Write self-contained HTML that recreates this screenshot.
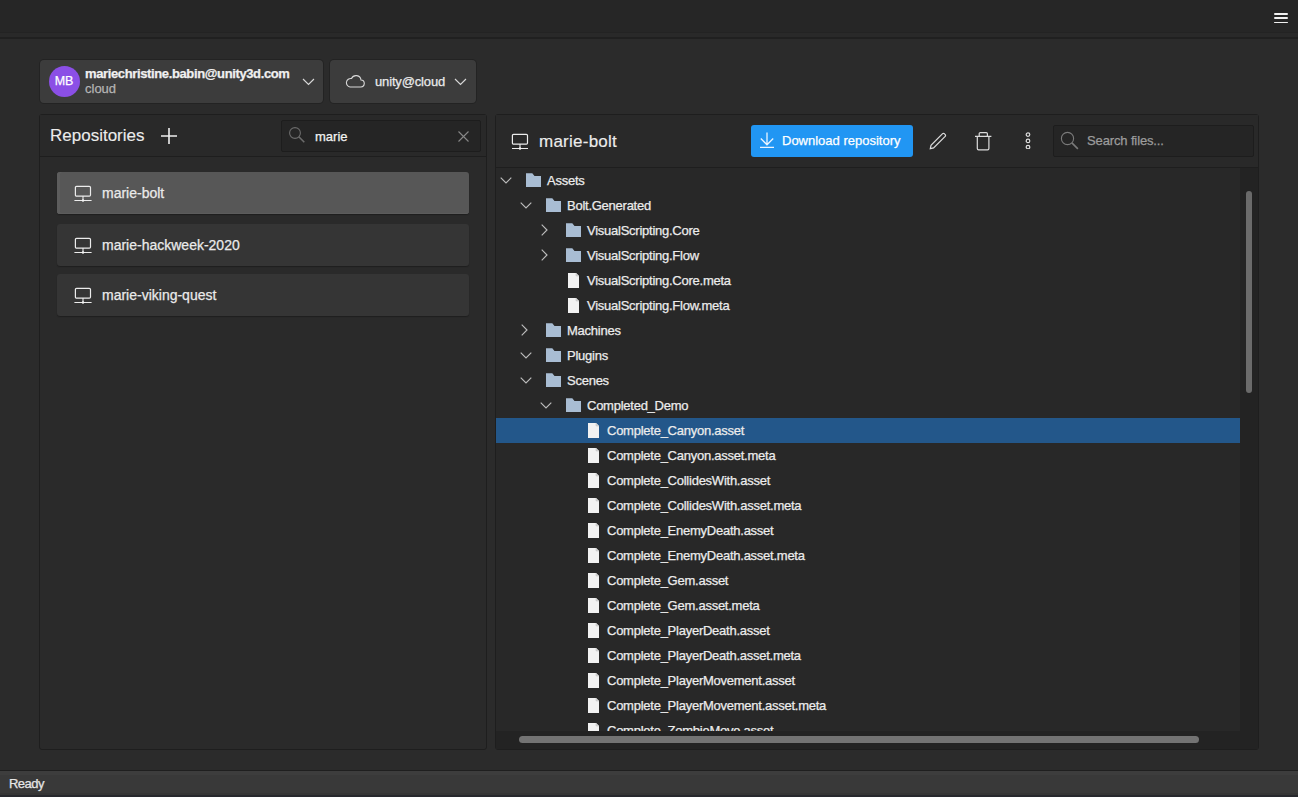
<!DOCTYPE html>
<html><head><meta charset="utf-8">
<style>
*{box-sizing:border-box;margin:0;padding:0}
html,body{width:1298px;height:797px;overflow:hidden;-webkit-text-stroke:0.25px currentColor;background:#2b2b2b;font-family:"Liberation Sans",sans-serif;color:#e6e6e6}
.abs{position:absolute}
#top{left:0;top:0;width:1298px;height:39px;background:#262626;border-bottom:2px solid #202020;box-shadow:inset 0 -4px 0 #292929}
#burger{left:1274px;top:12px;width:14px;height:12px}
#burger i{position:absolute;left:0;width:14px;height:1.8px;background:#f0f0f0;border-radius:1px}
.card{background:#3c3c3c;border-radius:4px;box-shadow:0 0 0 1px #232323}
#acct{left:40px;top:60px;width:283px;height:43px}
#avatar{left:8.5px;top:5.5px;width:31px;height:31px;border-radius:50%;background:#8b4fe6;color:#fff;font-size:12.5px;text-align:center;line-height:31px}
#email{left:45px;top:6px;font-size:13px;font-weight:bold;color:#f0f0f0;white-space:nowrap;letter-spacing:-0.37px}
#cloud{left:45px;top:21px;font-size:13px;color:#b4b4b4}
#ws{left:330px;top:60px;width:146px;height:43px}
#wsname{left:45px;top:14px;font-size:13px;color:#eaeaea;white-space:nowrap;letter-spacing:-0.15px}
.panel{border:1px solid #1e1e1e;border-radius:3px;background:#2a2a2a}
#lp{left:39px;top:114px;width:448px;height:636px}
#lph{left:0;top:0;width:446px;height:42px;background:#292929;border-bottom:1px solid #1e1e1e}
#lpt{left:10px;top:11px;font-size:17px;color:#ececec;-webkit-text-stroke:0.1px currentColor}
#plus{left:121px;top:13px;width:16px;height:16px}
.search{background:#252525;border-radius:2px;border:1px solid #1d1d1d}
#ls{left:241px;top:5px;width:200px;height:32px}
.repo{left:17px;width:412px;height:42px;background:#353535;border-radius:3px;box-shadow:0 1px 1px #1f1f1f}
.repo.sel{background:#575757;box-shadow:inset 3px 0 0 #5d5d5d,inset 0 -1px 0 #5c5c5c,0 1px 1px #1f1f1f}
.repo span{position:absolute;left:45px;top:13px;font-size:14px;color:#eaeaea;white-space:nowrap}
.repo svg{position:absolute;left:17px;top:13px}
#rp{left:495px;top:114px;width:764px;height:636px;background:#282828}
#rph{left:0;top:0;width:762px;height:53px;background:#292929;border-bottom:1px solid #1e1e1e}
#rpt{left:43px;top:17px;font-size:17px;color:#ececec;-webkit-text-stroke:0.15px currentColor;letter-spacing:0.25px}
#dl{left:255px;top:10px;width:162px;height:32px;background:#2196f3;border-radius:3px}
#dl span{position:absolute;left:31px;top:8px;font-size:13px;color:#fff;white-space:nowrap}
#sf{left:557px;top:10px;width:201px;height:32px}
#tree{left:0;top:53px;width:745px;height:563px;overflow:hidden}
.row{position:absolute;left:0;width:745px;height:25px}
.row.sel{background:#23578a}
.row svg{position:absolute}
.row span{position:absolute;top:5px;font-size:13px;color:#ececec;white-space:nowrap;letter-spacing:-0.25px}
#vs{left:744px;top:53px;width:18px;height:563px;background:#232323}
#vthumb{left:6px;top:23px;width:6px;height:202px;background:#6a6a6a;border-radius:3px}
#hs{left:0;top:616px;width:762px;height:18px;background:#232323}
#hthumb{left:23px;top:5px;width:680px;height:7px;background:#737373;border-radius:4px}
#status{left:0;top:770px;width:1298px;height:27px;background:#393939;border-top:1px solid #1f1f1f;box-shadow:inset 0 4px 0 #3d3d3d}
#status span{position:absolute;left:9px;top:5px;font-size:13px;color:#e6e6e6;letter-spacing:-0.55px}
</style></head><body>
<div id="top" class="abs"></div>
<div class="abs" style="left:0;top:32px;width:1298px;height:1px;background:#232323"></div>
<div id="burger" class="abs"><i style="top:1px"></i><i style="top:5.3px"></i><i style="top:9.6px"></i></div>

<div id="acct" class="abs card">
  <div id="avatar" class="abs">MB</div>
  <div id="email" class="abs">mariechristine.babin@unity3d.com</div>
  <div id="cloud" class="abs">cloud</div>
  <svg class="abs" style="left:262px;top:18px" width="13" height="8" viewBox="0 0 13 8"><path d="M1 1l5.5 5.5L12 1" fill="none" stroke="#d8d8d8" stroke-width="1.15"/></svg>
</div>
<div id="ws" class="abs card">
  <svg class="abs" style="left:15px;top:14px" width="20" height="14" viewBox="0 0 20 14"><path d="M5 13h10.5a3.5 3.5 0 0 0 .5-7 5 5 0 0 0-9.5-1.5A4.2 4.2 0 0 0 5 13z" fill="none" stroke="#d8d8d8" stroke-width="1.1"/></svg>
  <div id="wsname" class="abs">unity@cloud</div>
  <svg class="abs" style="left:124px;top:18px" width="13" height="8" viewBox="0 0 13 8"><path d="M1 1l5.5 5.5L12 1" fill="none" stroke="#d8d8d8" stroke-width="1.15"/></svg>
</div>

<div id="lp" class="abs panel">
  <div id="lph" class="abs">
    <div id="lpt" class="abs">Repositories</div>
    <svg id="plus" class="abs" viewBox="0 0 16 16"><path d="M8 0v16M0 8h16" stroke="#eee" stroke-width="1.6"/></svg>
    <div id="ls" class="abs search"><svg class="abs" style="left:6px;top:5px" width="18" height="18" viewBox="0 0 18 18"><circle cx="7" cy="7" r="5.4" fill="none" stroke="#6c6c6c" stroke-width="1.1"/><path d="M10.8 10.8l5.5 5.5" stroke="#6c6c6c" stroke-width="1.6"/></svg><div class="abs" style="left:33px;top:8px;font-size:13px;color:#f2f2f2">marie</div><svg class="abs" style="left:176px;top:10px" width="11" height="11" viewBox="0 0 11 11"><path d="M0.5 0.5l10 10M10.5 0.5l-10 10" stroke="#888888" stroke-width="1.1"/></svg></div>
  </div>
  <div class="abs repo sel" style="top:57px"><svg width="18" height="17" viewBox="0 0 18 17"><rect x="1.4" y="1.3" width="15.1" height="9.8" rx="1.2" fill="none" stroke="#ececec" stroke-width="1.2"/><path d="M9 11.1v4.4M0.4 15.5h17.2" stroke="#ececec" stroke-width="1.1"/><circle cx="9" cy="15.5" r="1.2" fill="#f4f4f4"/></svg><span>marie-bolt</span></div>
  <div class="abs repo" style="top:109px"><svg width="18" height="17" viewBox="0 0 18 17"><rect x="1.4" y="1.3" width="15.1" height="9.8" rx="1.2" fill="none" stroke="#ececec" stroke-width="1.2"/><path d="M9 11.1v4.4M0.4 15.5h17.2" stroke="#ececec" stroke-width="1.1"/><circle cx="9" cy="15.5" r="1.2" fill="#f4f4f4"/></svg><span>marie-hackweek-2020</span></div>
  <div class="abs repo" style="top:159px"><svg width="18" height="17" viewBox="0 0 18 17"><rect x="1.4" y="1.3" width="15.1" height="9.8" rx="1.2" fill="none" stroke="#ececec" stroke-width="1.2"/><path d="M9 11.1v4.4M0.4 15.5h17.2" stroke="#ececec" stroke-width="1.1"/><circle cx="9" cy="15.5" r="1.2" fill="#f4f4f4"/></svg><span>marie-viking-quest</span></div>
</div>

<div id="rp" class="abs panel">
  <div id="rph" class="abs">
    <svg class="abs" style="left:15px;top:18px" width="18" height="17" viewBox="0 0 18 17"><rect x="1.4" y="1.3" width="15.1" height="9.8" rx="1.2" fill="none" stroke="#ececec" stroke-width="1.2"/><path d="M9 11.1v4.4M1 15.5h16" stroke="#ececec" stroke-width="1.1"/><circle cx="9" cy="15.5" r="1.2" fill="#f4f4f4"/></svg><div id="rpt" class="abs">marie-bolt</div>
    <div id="dl" class="abs"><svg class="abs" style="left:8px;top:6px" width="16" height="17" viewBox="0 0 16 17"><path d="M8 1.5v12.5M1.8 7.5L8 13.8l6.2-6.3M1 16.4h14" fill="none" stroke="#eaf4ff" stroke-width="1.3"/></svg><span>Download repository</span></div><svg class="abs" style="left:433px;top:17px" width="18" height="18" viewBox="0 0 18 18"><path d="M1.3 16.6l0.7-3.3L13.6 1.7a1.2 1.2 0 0 1 1.7 0l0.9 0.9a1.2 1.2 0 0 1 0 1.7L4.6 15.9z" fill="none" stroke="#dcdcdc" stroke-width="1.2"/></svg><svg class="abs" style="left:479px;top:17px" width="18" height="19" viewBox="0 0 18 19"><path d="M0 4.3h16.4M4.2 4.3V1.7a1.1 1.1 0 0 1 1.1-1.1h6a1.1 1.1 0 0 1 1.1 1.1v2.6M2.3 4.3v12.2a1.3 1.3 0 0 0 1.3 1.3h9a1.3 1.3 0 0 0 1.3-1.3V4.3" fill="none" stroke="#dcdcdc" stroke-width="1.2"/></svg><svg class="abs" style="left:528px;top:16px" width="8" height="18" viewBox="0 0 8 18"><circle cx="4" cy="3.6" r="1.8" fill="none" stroke="#dcdcdc" stroke-width="1.2"/><circle cx="4" cy="9.9" r="1.8" fill="none" stroke="#dcdcdc" stroke-width="1.2"/><circle cx="4" cy="16.1" r="1.8" fill="none" stroke="#dcdcdc" stroke-width="1.2"/></svg>
    <div id="sf" class="abs search"><svg class="abs" style="left:5px;top:4px" width="22" height="22" viewBox="0 0 22 22"><circle cx="8.5" cy="8.5" r="6.1" fill="none" stroke="#7a7a7a" stroke-width="1.1"/><path d="M12.9 12.9l6 6" stroke="#7a7a7a" stroke-width="1.6"/></svg><div class="abs" style="left:33px;top:7px;font-size:13px;color:#9c9c9c;white-space:nowrap;letter-spacing:-0.13px">Search files...</div></div>
  </div>
  <div id="tree" class="abs">
<div class="row" style="top:0px"><svg class="chev" style="left:4px;top:9px" width="12" height="7" viewBox="0 0 12 7"><path d="M0.7 0.7l5.3 5.3l5.3-5.3" fill="none" stroke="#bdbdbd" stroke-width="1.15"/></svg><svg class="fold" style="left:30px;top:5px" width="15" height="14" viewBox="0 0 15 14"><path d="M0 0.3h6.3l2.2 2.8H15V14H0z" fill="#a9bdd3"/></svg><span style="left:51px">Assets</span></div>
<div class="row" style="top:25px"><svg class="chev" style="left:24px;top:9px" width="12" height="7" viewBox="0 0 12 7"><path d="M0.7 0.7l5.3 5.3l5.3-5.3" fill="none" stroke="#bdbdbd" stroke-width="1.15"/></svg><svg class="fold" style="left:50px;top:5px" width="15" height="14" viewBox="0 0 15 14"><path d="M0 0.3h6.3l2.2 2.8H15V14H0z" fill="#a9bdd3"/></svg><span style="left:71px">Bolt.Generated</span></div>
<div class="row" style="top:50px"><svg class="chev" style="left:45px;top:6px" width="7" height="12" viewBox="0 0 7 12"><path d="M0.7 0.7l5.3 5.3l-5.3 5.3" fill="none" stroke="#bdbdbd" stroke-width="1.15"/></svg><svg class="fold" style="left:70px;top:5px" width="15" height="14" viewBox="0 0 15 14"><path d="M0 0.3h6.3l2.2 2.8H15V14H0z" fill="#a9bdd3"/></svg><span style="left:91px">VisualScripting.Core</span></div>
<div class="row" style="top:75px"><svg class="chev" style="left:45px;top:6px" width="7" height="12" viewBox="0 0 7 12"><path d="M0.7 0.7l5.3 5.3l-5.3 5.3" fill="none" stroke="#bdbdbd" stroke-width="1.15"/></svg><svg class="fold" style="left:70px;top:5px" width="15" height="14" viewBox="0 0 15 14"><path d="M0 0.3h6.3l2.2 2.8H15V14H0z" fill="#a9bdd3"/></svg><span style="left:91px">VisualScripting.Flow</span></div>
<div class="row" style="top:100px"><svg class="file" style="left:72px;top:4.5px" width="11" height="15" viewBox="0 0 11 15"><path d="M0 0h8.2L11 2.8V15H0z" fill="#f2f2f2"/><path d="M8.2 0v2.8H11" fill="none" stroke="#b8b8b8" stroke-width="0.8"/></svg><span style="left:91px">VisualScripting.Core.meta</span></div>
<div class="row" style="top:125px"><svg class="file" style="left:72px;top:4.5px" width="11" height="15" viewBox="0 0 11 15"><path d="M0 0h8.2L11 2.8V15H0z" fill="#f2f2f2"/><path d="M8.2 0v2.8H11" fill="none" stroke="#b8b8b8" stroke-width="0.8"/></svg><span style="left:91px">VisualScripting.Flow.meta</span></div>
<div class="row" style="top:150px"><svg class="chev" style="left:25px;top:6px" width="7" height="12" viewBox="0 0 7 12"><path d="M0.7 0.7l5.3 5.3l-5.3 5.3" fill="none" stroke="#bdbdbd" stroke-width="1.15"/></svg><svg class="fold" style="left:50px;top:5px" width="15" height="14" viewBox="0 0 15 14"><path d="M0 0.3h6.3l2.2 2.8H15V14H0z" fill="#a9bdd3"/></svg><span style="left:71px">Machines</span></div>
<div class="row" style="top:175px"><svg class="chev" style="left:24px;top:9px" width="12" height="7" viewBox="0 0 12 7"><path d="M0.7 0.7l5.3 5.3l5.3-5.3" fill="none" stroke="#bdbdbd" stroke-width="1.15"/></svg><svg class="fold" style="left:50px;top:5px" width="15" height="14" viewBox="0 0 15 14"><path d="M0 0.3h6.3l2.2 2.8H15V14H0z" fill="#a9bdd3"/></svg><span style="left:71px">Plugins</span></div>
<div class="row" style="top:200px"><svg class="chev" style="left:24px;top:9px" width="12" height="7" viewBox="0 0 12 7"><path d="M0.7 0.7l5.3 5.3l5.3-5.3" fill="none" stroke="#bdbdbd" stroke-width="1.15"/></svg><svg class="fold" style="left:50px;top:5px" width="15" height="14" viewBox="0 0 15 14"><path d="M0 0.3h6.3l2.2 2.8H15V14H0z" fill="#a9bdd3"/></svg><span style="left:71px">Scenes</span></div>
<div class="row" style="top:225px"><svg class="chev" style="left:44px;top:9px" width="12" height="7" viewBox="0 0 12 7"><path d="M0.7 0.7l5.3 5.3l5.3-5.3" fill="none" stroke="#bdbdbd" stroke-width="1.15"/></svg><svg class="fold" style="left:70px;top:5px" width="15" height="14" viewBox="0 0 15 14"><path d="M0 0.3h6.3l2.2 2.8H15V14H0z" fill="#a9bdd3"/></svg><span style="left:91px">Completed_Demo</span></div>
<div class="row sel" style="top:250px"><svg class="file" style="left:92px;top:4.5px" width="11" height="15" viewBox="0 0 11 15"><path d="M0 0h8.2L11 2.8V15H0z" fill="#f2f2f2"/><path d="M8.2 0v2.8H11" fill="none" stroke="#b8b8b8" stroke-width="0.8"/></svg><span style="left:111px">Complete_Canyon.asset</span></div>
<div class="row" style="top:275px"><svg class="file" style="left:92px;top:4.5px" width="11" height="15" viewBox="0 0 11 15"><path d="M0 0h8.2L11 2.8V15H0z" fill="#f2f2f2"/><path d="M8.2 0v2.8H11" fill="none" stroke="#b8b8b8" stroke-width="0.8"/></svg><span style="left:111px">Complete_Canyon.asset.meta</span></div>
<div class="row" style="top:300px"><svg class="file" style="left:92px;top:4.5px" width="11" height="15" viewBox="0 0 11 15"><path d="M0 0h8.2L11 2.8V15H0z" fill="#f2f2f2"/><path d="M8.2 0v2.8H11" fill="none" stroke="#b8b8b8" stroke-width="0.8"/></svg><span style="left:111px">Complete_CollidesWith.asset</span></div>
<div class="row" style="top:325px"><svg class="file" style="left:92px;top:4.5px" width="11" height="15" viewBox="0 0 11 15"><path d="M0 0h8.2L11 2.8V15H0z" fill="#f2f2f2"/><path d="M8.2 0v2.8H11" fill="none" stroke="#b8b8b8" stroke-width="0.8"/></svg><span style="left:111px">Complete_CollidesWith.asset.meta</span></div>
<div class="row" style="top:350px"><svg class="file" style="left:92px;top:4.5px" width="11" height="15" viewBox="0 0 11 15"><path d="M0 0h8.2L11 2.8V15H0z" fill="#f2f2f2"/><path d="M8.2 0v2.8H11" fill="none" stroke="#b8b8b8" stroke-width="0.8"/></svg><span style="left:111px">Complete_EnemyDeath.asset</span></div>
<div class="row" style="top:375px"><svg class="file" style="left:92px;top:4.5px" width="11" height="15" viewBox="0 0 11 15"><path d="M0 0h8.2L11 2.8V15H0z" fill="#f2f2f2"/><path d="M8.2 0v2.8H11" fill="none" stroke="#b8b8b8" stroke-width="0.8"/></svg><span style="left:111px">Complete_EnemyDeath.asset.meta</span></div>
<div class="row" style="top:400px"><svg class="file" style="left:92px;top:4.5px" width="11" height="15" viewBox="0 0 11 15"><path d="M0 0h8.2L11 2.8V15H0z" fill="#f2f2f2"/><path d="M8.2 0v2.8H11" fill="none" stroke="#b8b8b8" stroke-width="0.8"/></svg><span style="left:111px">Complete_Gem.asset</span></div>
<div class="row" style="top:425px"><svg class="file" style="left:92px;top:4.5px" width="11" height="15" viewBox="0 0 11 15"><path d="M0 0h8.2L11 2.8V15H0z" fill="#f2f2f2"/><path d="M8.2 0v2.8H11" fill="none" stroke="#b8b8b8" stroke-width="0.8"/></svg><span style="left:111px">Complete_Gem.asset.meta</span></div>
<div class="row" style="top:450px"><svg class="file" style="left:92px;top:4.5px" width="11" height="15" viewBox="0 0 11 15"><path d="M0 0h8.2L11 2.8V15H0z" fill="#f2f2f2"/><path d="M8.2 0v2.8H11" fill="none" stroke="#b8b8b8" stroke-width="0.8"/></svg><span style="left:111px">Complete_PlayerDeath.asset</span></div>
<div class="row" style="top:475px"><svg class="file" style="left:92px;top:4.5px" width="11" height="15" viewBox="0 0 11 15"><path d="M0 0h8.2L11 2.8V15H0z" fill="#f2f2f2"/><path d="M8.2 0v2.8H11" fill="none" stroke="#b8b8b8" stroke-width="0.8"/></svg><span style="left:111px">Complete_PlayerDeath.asset.meta</span></div>
<div class="row" style="top:500px"><svg class="file" style="left:92px;top:4.5px" width="11" height="15" viewBox="0 0 11 15"><path d="M0 0h8.2L11 2.8V15H0z" fill="#f2f2f2"/><path d="M8.2 0v2.8H11" fill="none" stroke="#b8b8b8" stroke-width="0.8"/></svg><span style="left:111px">Complete_PlayerMovement.asset</span></div>
<div class="row" style="top:525px"><svg class="file" style="left:92px;top:4.5px" width="11" height="15" viewBox="0 0 11 15"><path d="M0 0h8.2L11 2.8V15H0z" fill="#f2f2f2"/><path d="M8.2 0v2.8H11" fill="none" stroke="#b8b8b8" stroke-width="0.8"/></svg><span style="left:111px">Complete_PlayerMovement.asset.meta</span></div>
<div class="row" style="top:550px"><svg class="file" style="left:92px;top:4.5px" width="11" height="15" viewBox="0 0 11 15"><path d="M0 0h8.2L11 2.8V15H0z" fill="#f2f2f2"/><path d="M8.2 0v2.8H11" fill="none" stroke="#b8b8b8" stroke-width="0.8"/></svg><span style="left:111px">Complete_ZombieMove.asset</span></div>
</div>
  <div id="vs" class="abs"><div id="vthumb" class="abs"></div></div>
  <div id="hs" class="abs"><div id="hthumb" class="abs"></div></div>
</div>

<div id="status" class="abs"><span>Ready</span></div>
<div class="abs" style="left:0;top:793px;width:1298px;height:2px;background:#353535"></div><div class="abs" style="left:0;top:795px;width:1298px;height:2px;background:#27282d"></div>
</body></html>
